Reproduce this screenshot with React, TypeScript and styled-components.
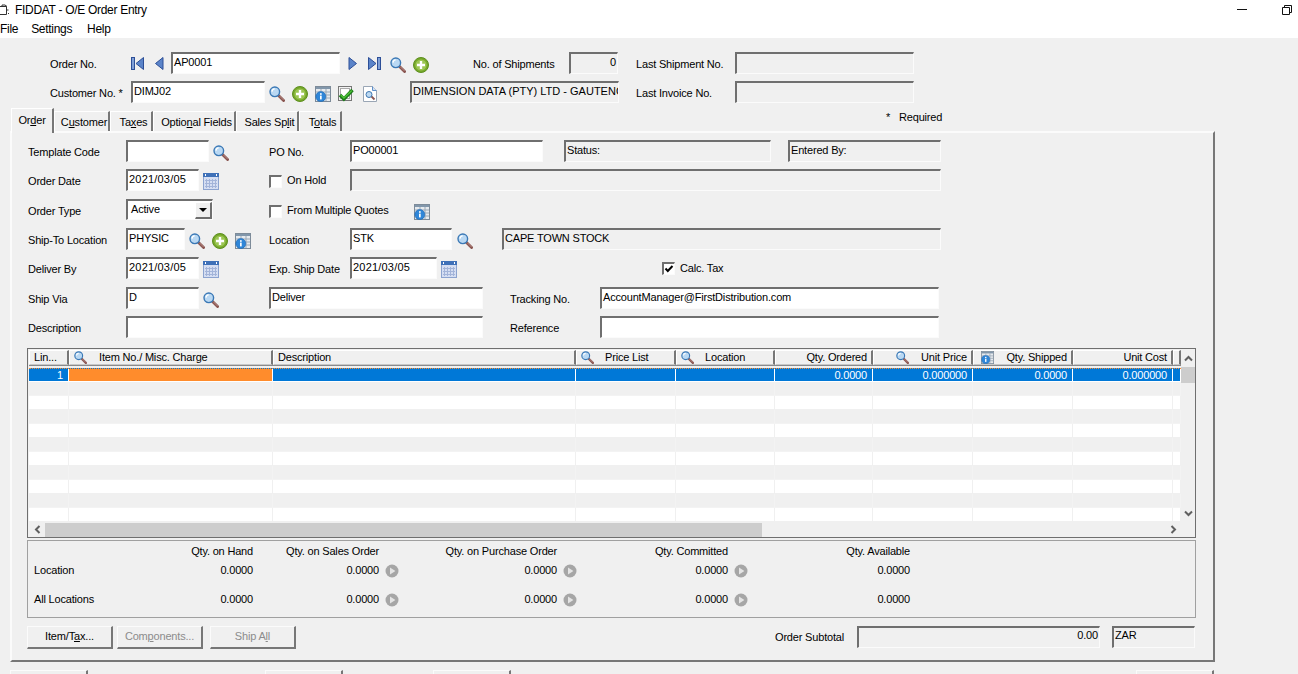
import React from 'react'
import styled, { createGlobalStyle, css } from 'styled-components'

const GlobalStyle = createGlobalStyle`
  html, body { margin: 0; padding: 0; background: #f0f0f0; }
  body { font-family: "Liberation Sans", Arial, sans-serif; font-size: 11px; letter-spacing: -0.18px; color: #000; }
`

const spaced = css<{ $ml?: number }>`
  margin-left: ${({ $ml }) => $ml ?? 0}px;
  flex: none;
`

const Page = styled.div`
  width: 1298px;
  height: 674px;
  overflow: hidden;
  background: #f0f0f0;
`
const TitleBar = styled.div`
  height: 19px;
  padding-right: 6px;
  background: #fff;
  display: flex;
  align-items: center;
  font-size: 12px;
  letter-spacing: -0.3px;
`
const TitleText = styled.span`
  margin-left: 6px;
`
const MinimizeBtn = styled.svg`
  margin-left: auto;
  flex: none;
`
const RestoreBtn = styled.svg`
  margin-left: 35px;
  flex: none;
`
const MenuBar = styled.div`
  height: 19px;
  background: #fff;
  display: flex;
  align-items: center;
  font-size: 12px;
  letter-spacing: -0.3px;
`
const MenuItem = styled.span<{ $ml?: number }>`
  ${spaced}
`
const Header = styled.div`
  padding: 14px 0 0 50px;
  display: flex;
  flex-direction: column;
  gap: 7px;
`
const Row = styled.div`
  height: 22px;
  display: flex;
  align-items: flex-start;
`
const Label = styled.div<{ $ml?: number; $w: number }>`
  ${spaced}
  width: ${({ $w }) => $w}px;
  height: 22px;
  line-height: 24px;
  white-space: nowrap;
`
const Field = styled.div<{ $ml?: number; $w: number; $off?: boolean; $right?: boolean }>`
  ${spaced}
  width: ${({ $w }) => $w}px;
  height: 22px;
  box-sizing: border-box;
  border-style: solid;
  border-width: 2px 1px 1px 2px;
  border-color: #6f6f6f #fbfbfb #fbfbfb #6f6f6f;
  background: ${({ $off }) => ($off ? '#f0f0f0' : '#fff')};
  padding: 0 1px;
  line-height: 17px;
  overflow: hidden;
  white-space: nowrap;
  text-align: ${({ $right }) => ($right ? 'right' : 'left')};
`
const DateField = styled(Field)`
  letter-spacing: 0.2px;
`
const WideField = styled(Field)`
  letter-spacing: 0;
`
const FootField = styled(Field)`
  line-height: 15px;
`
const IconBox = styled.span<{ $ml?: number; $mt?: number }>`
  ${spaced}
  margin-top: ${({ $mt }) => $mt ?? 5}px;
  display: block;
  line-height: 0;
`
const SelectBox = styled(Field)`
  display: flex;
  align-items: flex-start;
  padding: 0 0 0 3px;
  height: 21px;
`
const SelectText = styled.span`
  flex: 1;
`
const SelectBtn = styled.span`
  width: 17px;
  height: 17px;
  margin: 1px 0 0 0;
  box-sizing: border-box;
  border-style: solid;
  border-width: 1px 2px 2px 1px;
  border-color: #fff #6f6f6f #6f6f6f #fff;
  background: #f0f0f0;
  display: flex;
  align-items: center;
  justify-content: center;
  &::after {
    content: '';
    border-style: solid;
    border-width: 4px 4px 0 4px;
    border-color: #000 transparent transparent transparent;
  }
`
const CheckBox = styled.span<{ $ml?: number; $mt?: number }>`
  ${spaced}
  width: 13px;
  height: 13px;
  margin-top: ${({ $mt }) => $mt ?? 6}px;
  box-sizing: border-box;
  border-style: solid;
  border-width: 2px 1px 1px 2px;
  border-color: #6f6f6f #fbfbfb #fbfbfb #6f6f6f;
  background: #fff;
  display: block;
  line-height: 0;
`
const CheckText = styled.div<{ $ml?: number; $w?: number }>`
  ${spaced}
  ${({ $w }) => ($w ? `width: ${$w}px;` : '')}
  height: 22px;
  line-height: 22px;
  white-space: nowrap;
`
const TabStrip = styled.div`
  height: 23px;
  margin-top: 5px;
  padding-left: 11px;
  display: flex;
  align-items: flex-end;
  position: relative;
  z-index: 1;
`
const Tab = styled.div<{ $w: number; $active?: boolean }>`
  width: ${({ $w }) => $w}px;
  box-sizing: border-box;
  height: ${({ $active }) => ($active ? 25 : 20)}px;
  margin-bottom: ${({ $active }) => ($active ? -2 : 0)}px;
  padding-left: ${({ $active }) => ($active ? 0 : 5)}px;
  border-style: solid;
  border-width: 1px 2px 0 1px;
  border-color: #fff #777 #fff #fff;
  background: #f0f0f0;
  text-align: center;
  line-height: ${({ $active }) => ($active ? 22 : 20)}px;
  white-space: nowrap;
`
const Required = styled.div`
  margin-left: 544px;
  align-self: flex-start;
  display: flex;
  line-height: 18px;
`
const RequiredMark = styled.span`
  width: 13px;
`
const TabPanel = styled.div`
  margin-left: 10px;
  width: 1205px;
  height: 531px;
  box-sizing: border-box;
  border-style: solid;
  border-width: 2px 2px 2px 2px;
  border-color: #fbfbfb #777 #777 #fbfbfb;
  padding: 7px 0 0 16px;
`
const Form = styled.div`
  display: flex;
  flex-direction: column;
  gap: 7.333px;
`
const GridFrame = styled.div`
  margin: 10px 0 0 -1px;
  width: 1169px;
  height: 190px;
  box-sizing: border-box;
  border: 1px solid #6f6f6f;
  padding: 1px 0 0 1px;
  display: flex;
  flex-direction: column;
`
const GridMain = styled.div`
  display: flex;
  height: 172px;
`
const GridColumns = styled.div`
  width: 1152px;
  overflow: hidden;
`
const HeadRow = styled.div`
  display: flex;
  margin-bottom: 2px;
  border-bottom: 1px solid #8a8a8a;
  height: 15px;
`
const HeadCell = styled.div<{ $w: number }>`
  width: ${({ $w }) => $w}px;
  flex: none;
  box-sizing: border-box;
  border-style: solid;
  border-width: 1px 2px 1px 1px;
  border-color: #fff #777 #c8c8c8 #fff;
  display: flex;
  align-items: center;
  padding-right: 4px;
  white-space: nowrap;
  overflow: hidden;
`
const HeadIcon = styled.span<{ $ml: number }>`
  margin-left: ${({ $ml }) => $ml}px;
  flex: none;
  line-height: 0;
`
const HeadText = styled.span<{ $ml?: number; $right?: boolean }>`
  margin-left: ${({ $ml, $right }) => ($right ? 'auto' : `${$ml ?? 0}px`)};
`
const DataRow = styled.div<{ $kind: 'sel' | 'grey' | 'white' }>`
  display: flex;
  height: 14px;
  background: ${({ $kind }) => ($kind === 'sel' ? '#0078d7' : $kind === 'grey' ? '#f0f0f0' : '#fff')};
  color: #fff;
  ${({ $kind }) => $kind === 'sel' && 'border-top: 1px dotted #ff8c2c; box-sizing: border-box;'}
`
const DataCell = styled.div<{ $w: number; $orange?: boolean; $line: string }>`
  width: ${({ $w }) => $w}px;
  flex: none;
  box-sizing: border-box;
  border-right: 1px solid ${({ $line }) => $line};
  border-bottom: 1px solid ${({ $line }) => $line};
  background: ${({ $orange }) => ($orange ? '#ff8c2c' : 'transparent')};
  text-align: right;
  padding-right: 5px;
  line-height: 12px;
  white-space: nowrap;
`
const VScroll = styled.div`
  width: 14px;
  display: flex;
  flex-direction: column;
  align-items: center;
`
const ScrollArrow = styled.span<{ $mt?: number }>`
  margin-top: ${({ $mt }) => $mt ?? 0}px;
  flex: none;
  height: 17px;
  display: flex;
  align-items: center;
  justify-content: center;
  line-height: 0;
`
const VThumb = styled.div`
  width: 14px;
  height: 16px;
  flex: none;
  background: #cdcdcd;
`
const HScroll = styled.div`
  margin-top: 1px;
  width: 1152px;
  height: 14px;
  display: flex;
  align-items: center;
`
const HArrow = styled.span<{ $ml?: number }>`
  margin-left: ${({ $ml }) => $ml ?? 0}px;
  width: 16px;
  flex: none;
  display: flex;
  justify-content: center;
  line-height: 0;
`
const HThumb = styled.div`
  width: 717px;
  height: 14px;
  background: #cdcdcd;
`
const StatsBox = styled.div`
  margin: 2px 0 0 -1px;
  width: 1169px;
  height: 78px;
  box-sizing: border-box;
  border: 1px solid #a0a0a0;
  padding: 3px 0 0 6px;
  display: grid;
  grid-template-columns: 100px 119px 126px 20px 158px 20px 151px 20px 162px;
  grid-template-rows: 19px 29px 29px;
  line-height: 14px;
`
const StatCell = styled.div<{ $right?: boolean }>`
  text-align: ${({ $right }) => ($right ? 'right' : 'left')};
  white-space: nowrap;
`
const GoCell = styled.div`
  padding: 1px 0 0 6px;
  line-height: 0;
`
const FootRow = styled.div`
  margin: 8px 0 0 -1px;
  display: flex;
  align-items: flex-start;
`
const PushButton = styled.div<{ $ml?: number; $off?: boolean }>`
  ${spaced}
  width: 86px;
  height: 23px;
  box-sizing: border-box;
  border-style: solid;
  border-width: 1px 2px 2px 1px;
  border-color: #fbfbfb #777 #777 #fbfbfb;
  background: #f0f0f0;
  color: ${({ $off }) => ($off ? '#8c8c8c' : '#000')};
  text-align: center;
  line-height: 18px;
`
const SubtotalLabel = styled.div`
  margin-left: 479px;
  width: 82px;
  flex: none;
  height: 22px;
  line-height: 22px;
  white-space: nowrap;
`
const BottomBar = styled.div`
  margin-top: 8px;
  display: flex;
`
const BottomButton = styled.div<{ $ml: number; $w?: number }>`
  margin-left: ${({ $ml }) => $ml}px;
  width: ${({ $w }) => $w ?? 78}px;
  flex: none;
  height: 23px;
  box-sizing: border-box;
  border-style: solid;
  border-width: 1px 2px 2px 1px;
  border-color: #fbfbfb #777 #777 #fbfbfb;
`

const Search = ({ s = 16 }: { s?: number }) => (
  <svg width={s} height={s} viewBox="0 0 16 16">
    <line x1="9.5" y1="9.500" x2="14.6" y2="14.6" stroke="#8a5550" strokeWidth="2.8" strokeLinecap="round" />
    <line x1="10.400" y1="9.800" x2="14.6" y2="14" stroke="#c9a39c" strokeWidth="0.7" />
    <circle cx="5.800" cy="5.800" r="4.800" fill="#b9d8f3" stroke="#3a78b5" strokeWidth="1.4" />
    <path d="M3 5.600a2.900 2.900 0 0 1 2.700-2.700" fill="none" stroke="#fff" strokeWidth="1.300" />
  </svg>
)
const Plus = () => (
  <svg width="16" height="16" viewBox="0 0 16 16">
    <circle cx="8" cy="8" r="7.500" fill="#76a82a" stroke="#5d8f1f" />
    <circle cx="8" cy="8" r="5.600" fill="#9cc653" />
    <path d="M8 4v8M4 8h8" stroke="#fff" strokeWidth="2.400" />
  </svg>
)
const InfoGrid = ({ s = 16 }: { s?: number }) => (
  <svg width={s} height={s} viewBox="0 0 16 16">
    <rect x="0.500" y="0.500" width="15" height="15" fill="#e6eaee" stroke="#7d8b99" />
    <rect x="1" y="1" width="14" height="2" fill="#8297ab" />
    <path d="M11 3v12M6 3v3M1 6h4M7 6h8M11 9h4M11 12h4" stroke="#9aa8b6" strokeWidth="1" />
    <circle cx="5.800" cy="10.600" r="5" fill="#2f86d8" stroke="#1f66b0" strokeWidth="0.600" />
    <rect x="5" y="9.600" width="1.700" height="3.800" fill="#fff" />
    <rect x="5" y="7.200" width="1.700" height="1.600" fill="#fff" />
  </svg>
)
const Calendar = () => (
  <svg width="16" height="17" viewBox="0 0 16 17">
    <rect x="0.500" y="0.500" width="15" height="16" fill="#d5def2" stroke="#8ca3cf" />
    <rect x="0" y="0" width="16" height="4" fill="#3f71b8" />
    <rect x="2" y="1" width="1" height="2" fill="#fff" />
    <rect x="13" y="1" width="1" height="2" fill="#fff" />
    <path d="M3.500 6v9M6.500 6v9M9.500 6v9M12.500 6v9M2 7.500h12M2 10.500h12M2 13.500h12" stroke="#a3b4d9" strokeWidth="1" />
  </svg>
)
const CheckDoc = () => (
  <svg width="16" height="16" viewBox="0 0 16 16">
    <rect x="0.500" y="0.500" width="13" height="14" fill="#f2f2f2" stroke="#777" />
    <rect x="2.500" y="2.500" width="9" height="10" fill="#fff" stroke="#aaa" />
    <path d="M2 9l3.900 4L14.500 4" fill="none" stroke="#1b7c19" strokeWidth="3.400" />
    <path d="M2.800 9l3.100 3.100L13.800 4.400" fill="none" stroke="#4fc236" strokeWidth="1.400" />
  </svg>
)
const DocSearch = () => (
  <svg width="14" height="16" viewBox="0 0 14 16">
    <path d="M0.500 0.500h9l4 4v11h-13z" fill="#fff" stroke="#9aa6b5" />
    <path d="M9.500 0.500v4h4" fill="#cfe0f5" stroke="#5f8fc8" />
    <line x1="8" y1="10" x2="11.500" y2="13.500" stroke="#8a5550" strokeWidth="1.800" />
    <circle cx="6" cy="8.500" r="3" fill="#bcd9f2" stroke="#3f76b0" />
  </svg>
)
const navPaths = {
  first: 'M12.500 0.500v12L5 6.500z',
  prev: 'M9 0.500v12L1.500 6.500z',
  next: 'M1 0.500v12L8.500 6.500z',
  last: 'M0.500 0.500v12L8 6.500z',
}
const Nav = ({ kind }: { kind: keyof typeof navPaths }) => {
  const wide = kind === 'first' || kind === 'last'
  return (
    <svg width={wide ? 13 : 10} height="13" viewBox={`0 0 ${wide ? 13 : 10} 13`}>
      {kind === 'first' && <rect x="0.500" y="0.500" width="3" height="12" fill="#7f9fd6" stroke="#2d4f97" />}
      {kind === 'last' && <rect x="9.500" y="0.500" width="3" height="12" fill="#7f9fd6" stroke="#2d4f97" />}
      <path d={navPaths[kind]} fill="#5b84c9" stroke="#2d4f97" strokeLinejoin="round" />
    </svg>
  )
}
const GoCircle = () => (
  <svg width="14" height="14" viewBox="0 0 14 14">
    <circle cx="7" cy="7" r="6.500" fill="#a6a6a6" />
    <path d="M5 3.500v7L10.400 7z" fill="#e4e4e4" />
  </svg>
)
const Chevron = ({ d }: { d: string }) => (
  <svg width="9" height="9" viewBox="0 0 9 9">
    <path d={d} fill="none" stroke="#606060" strokeWidth="2" />
  </svg>
)

type Col = {
  label: string
  w: number
  icon?: 'search' | 'info'
  iconX?: number
  textX?: number
  right?: boolean
  value?: string
  orange?: boolean
}

const columns: Col[] = [
  { label: 'Lin...', w: 40, textX: 4, value: '1' },
  { label: 'Item No./ Misc. Charge', w: 204, icon: 'search', iconX: 4, textX: 12, orange: true },
  { label: 'Description', w: 303, textX: 4 },
  { label: 'Price List', w: 100, icon: 'search', iconX: 4, textX: 11 },
  { label: 'Location', w: 99, icon: 'search', iconX: 4, textX: 11 },
  { label: 'Qty. Ordered', w: 98, right: true, value: '0.0000' },
  { label: 'Unit Price', w: 100, icon: 'search', iconX: 22, right: true, value: '0.000000' },
  { label: 'Qty. Shipped', w: 100, icon: 'info', iconX: 7, right: true, value: '0.0000' },
  { label: 'Unit Cost', w: 100, right: true, value: '0.000000' },
  { label: '', w: 8 },
]

const rowKinds: Array<'sel' | 'grey' | 'white'> = [
  'sel', 'grey', 'white', 'grey', 'white', 'grey', 'white', 'grey', 'white', 'grey', 'white',
]

const LineGrid = () => (
  <GridFrame>
    <GridMain>
      <GridColumns>
        <HeadRow>
          {columns.map((c, i) => (
            <HeadCell key={i} $w={c.w}>
              {c.icon && (
                <HeadIcon $ml={c.iconX ?? 0}>
                  {c.icon === 'search' ? <Search s={13} /> : <InfoGrid s={13} />}
                </HeadIcon>
              )}
              <HeadText $ml={c.textX} $right={c.right}>{c.label}</HeadText>
            </HeadCell>
          ))}
        </HeadRow>
        {rowKinds.map((kind, r) => (
          <DataRow key={r} $kind={kind}>
            {columns.map((c, i) => (
              <DataCell
                key={i}
                $w={c.w}
                $orange={kind === 'sel' && c.orange}
                $line={kind === 'sel' ? '#fff' : kind === 'grey' ? '#f3f3f3' : '#f0f0f0'}
              >
                {kind === 'sel' ? c.value : ''}
              </DataCell>
            ))}
          </DataRow>
        ))}
      </GridColumns>
      <VScroll>
        <ScrollArrow><Chevron d="M1 6.500l3.500-3.500L8 6.500" /></ScrollArrow>
        <VThumb />
        <ScrollArrow $mt={122}><Chevron d="M1 2.500l3.500 3.500L8 2.500" /></ScrollArrow>
      </VScroll>
    </GridMain>
    <HScroll>
      <HArrow><Chevron d="M6.500 1L3 4.500 6.500 8" /></HArrow>
      <HThumb />
      <HArrow $ml={403}><Chevron d="M2.500 1L6 4.500 2.500 8" /></HArrow>
    </HScroll>
  </GridFrame>
)

const statRows = [
  { name: 'Location' },
  { name: 'All Locations' },
]

const Stats = () => (
  <StatsBox>
    <StatCell />
    <StatCell $right>Qty. on Hand</StatCell>
    <StatCell $right>Qty. on Sales Order</StatCell>
    <StatCell />
    <StatCell $right>Qty. on Purchase Order</StatCell>
    <StatCell />
    <StatCell $right>Qty. Committed</StatCell>
    <StatCell />
    <StatCell $right>Qty. Available</StatCell>
    {statRows.map(r => (
      <React.Fragment key={r.name}>
        <StatCell>{r.name}</StatCell>
        <StatCell $right>0.0000</StatCell>
        <StatCell $right>0.0000</StatCell>
        <GoCell><GoCircle /></GoCell>
        <StatCell $right>0.0000</StatCell>
        <GoCell><GoCircle /></GoCell>
        <StatCell $right>0.0000</StatCell>
        <GoCell><GoCircle /></GoCell>
        <StatCell $right>0.0000</StatCell>
      </React.Fragment>
    ))}
  </StatsBox>
)

export default function App() {
  return (
    <Page>
      <GlobalStyle />
      <TitleBar>
        <svg width="9" height="12" viewBox="0 0 9 12">
          <path d="M0 2.500h6.500v8H0M2 2.500V1h3l2 1.500M6.500 6H8.500M8 9.500h1" fill="none" stroke="#333" strokeWidth="1" />
        </svg>
        <TitleText>FIDDAT - O/E Order Entry</TitleText>
        <MinimizeBtn width="10" height="2" viewBox="0 0 10 2">
          <rect width="10" height="1" fill="#111" />
        </MinimizeBtn>
        <RestoreBtn width="10" height="10" viewBox="0 0 10 10">
          <path d="M2.500 2.500V.5h7v7h-2M.5 2.500h7v7h-7z" fill="none" stroke="#111" />
        </RestoreBtn>
      </TitleBar>
      <MenuBar>
        <MenuItem>File</MenuItem>
        <MenuItem $ml={13}>Settings</MenuItem>
        <MenuItem $ml={15}>Help</MenuItem>
      </MenuBar>

      <Header>
        <Row>
          <Label $w={81}>Order No.</Label>
          <IconBox><Nav kind="first" /></IconBox>
          <IconBox $ml={10}><Nav kind="prev" /></IconBox>
          <Field $ml={7} $w={169}>AP0001</Field>
          <IconBox $ml={8}><Nav kind="next" /></IconBox>
          <IconBox $ml={10}><Nav kind="last" /></IconBox>
          <IconBox $ml={9}><Search /></IconBox>
          <IconBox $ml={7}><Plus /></IconBox>
          <Label $ml={44} $w={96}>No. of Shipments</Label>
          <Field $w={49} $off $right>0</Field>
          <Label $ml={18} $w={99}>Last Shipment No.</Label>
          <Field $w={179} $off />
        </Row>
        <Row>
          <Label $w={81}>Customer No. *</Label>
          <Field $w={134}>DIMJ02</Field>
          <IconBox $ml={4}><Search /></IconBox>
          <IconBox $ml={7}><Plus /></IconBox>
          <IconBox $ml={7}><InfoGrid /></IconBox>
          <IconBox $ml={7}><CheckDoc /></IconBox>
          <IconBox $ml={9}><DocSearch /></IconBox>
          <WideField $ml={33} $w={209} $off>DIMENSION DATA (PTY) LTD - GAUTENG</WideField>
          <Label $ml={17} $w={99}>Last Invoice No.</Label>
          <Field $w={179} $off />
        </Row>
      </Header>

      <TabStrip>
        <Tab $w={43} $active>Or<u>d</u>er</Tab>
        <Tab $w={56}>C<u>u</u>stomer</Tab>
        <Tab $w={43}>Ta<u>x</u>es</Tab>
        <Tab $w={83}>Optio<u>n</u>al Fields</Tab>
        <Tab $w={63}>Sales Sp<u>l</u>it</Tab>
        <Tab $w={43}>T<u>o</u>tals</Tab>
        <Required>
          <RequiredMark>*</RequiredMark>
          Required
        </Required>
      </TabStrip>

      <TabPanel>
        <Form>
          <Row>
            <Label $w={98}>Template Code</Label>
            <Field $w={83} />
            <IconBox $ml={4}><Search /></IconBox>
            <Label $ml={40} $w={81}>PO No.</Label>
            <Field $w={193}>PO00001</Field>
            <Field $ml={21} $w={207} $off>Status:</Field>
            <Field $ml={17} $w={153} $off>Entered By:</Field>
          </Row>
          <Row>
            <Label $w={98}>Order Date</Label>
            <DateField $w={73}>2021/03/05</DateField>
            <IconBox $ml={4} $mt={4}><Calendar /></IconBox>
            <CheckBox $ml={50} />
            <CheckText $ml={5} $w={63}>On Hold</CheckText>
            <Field $w={591} $off />
          </Row>
          <Row>
            <Label $w={98}>Order Type</Label>
            <SelectBox $w={87}>
              <SelectText>Active</SelectText>
              <SelectBtn />
            </SelectBox>
            <CheckBox $ml={56} />
            <CheckText $ml={5} $w={127}>From Multiple Quotes</CheckText>
            <IconBox><InfoGrid /></IconBox>
          </Row>
          <Row>
            <Label $w={98}>Ship-To Location</Label>
            <Field $w={59}>PHYSIC</Field>
            <IconBox $ml={4}><Search /></IconBox>
            <IconBox $ml={7}><Plus /></IconBox>
            <IconBox $ml={7}><InfoGrid /></IconBox>
            <Label $ml={18} $w={81}>Location</Label>
            <Field $w={102}>STK</Field>
            <IconBox $ml={5}><Search /></IconBox>
            <Field $ml={29} $w={439} $off>CAPE TOWN STOCK</Field>
          </Row>
          <Row>
            <Label $w={98}>Deliver By</Label>
            <DateField $w={73}>2021/03/05</DateField>
            <IconBox $ml={4} $mt={4}><Calendar /></IconBox>
            <Label $ml={50} $w={81}>Exp. Ship Date</Label>
            <DateField $w={87}>2021/03/05</DateField>
            <IconBox $ml={4} $mt={4}><Calendar /></IconBox>
            <CheckBox $ml={205} $mt={5}>
              <svg width="10" height="10" viewBox="0 0 10 10">
                <path d="M1.500 4.500l2.300 2.500L8.500 2" fill="none" stroke="#000" strokeWidth="2" />
              </svg>
            </CheckBox>
            <CheckText $ml={5}>Calc. Tax</CheckText>
          </Row>
          <Row>
            <Label $w={98}>Ship Via</Label>
            <Field $w={73}>D</Field>
            <IconBox $ml={4}><Search /></IconBox>
            <Field $ml={50} $w={214}>Deliver</Field>
            <Label $ml={27} $w={90}>Tracking No.</Label>
            <Field $w={339}>AccountManager@FirstDistribution.com</Field>
          </Row>
          <Row>
            <Label $w={98}>Description</Label>
            <Field $w={357} />
            <Label $ml={27} $w={90}>Reference</Label>
            <Field $w={339} />
          </Row>
        </Form>

        <LineGrid />
        <Stats />

        <FootRow>
          <PushButton>Item/T<u>a</u>x...</PushButton>
          <PushButton $ml={4} $off>Com<u>p</u>onents...</PushButton>
          <PushButton $ml={7} $off>Ship A<u>l</u>l</PushButton>
          <SubtotalLabel>Order Subtotal</SubtotalLabel>
          <FootField $w={243} $off $right>0.00</FootField>
          <FootField $ml={12} $w={83} $off>ZAR</FootField>
        </FootRow>
      </TabPanel>

      <BottomBar>
        <BottomButton $ml={10} />
        <BottomButton $ml={177} />
        <BottomButton $ml={90} />
        <BottomButton $ml={625} />
      </BottomBar>
    </Page>
  )
}
